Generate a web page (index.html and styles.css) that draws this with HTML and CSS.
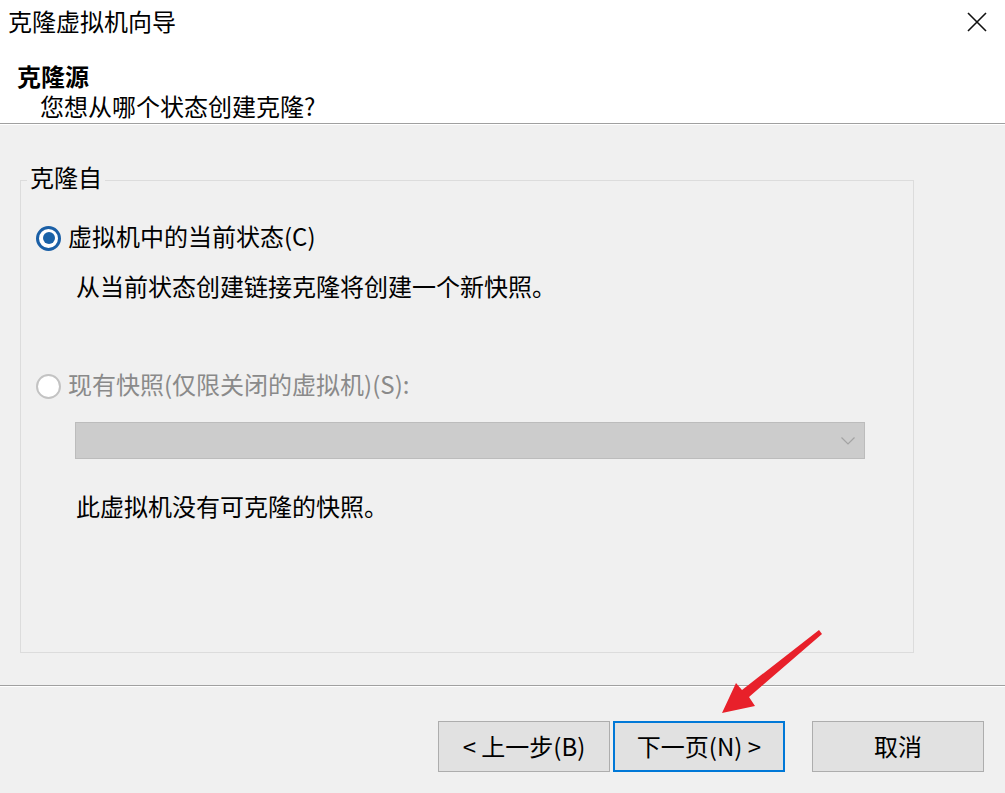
FILE: index.html
```html
<!DOCTYPE html>
<html lang="zh-CN">
<head>
<meta charset="utf-8">
<title>克隆虚拟机向导</title>
<link rel="stylesheet" href="styles.css">
</head>
<body>
<div class="window">
  <div class="titlebar">
    <span class="title">克隆虚拟机向导</span>
    <svg class="close" width="20" height="20" viewBox="0 0 20 20"><path d="M1 1 L19 19 M19 1 L1 19" stroke="#111" stroke-width="1.6" fill="none"/></svg>
  </div>
  <div class="header">
    <div class="h-title">克隆源</div>
    <div class="h-sub">您想从哪个状态创建克隆?</div>
  </div>
  <div class="sep"></div>
  <div class="content">
    <fieldset class="group">
      <legend class="legend">克隆自</legend>
      <div class="radio-row">
        <span class="radio checked"><span class="dot"></span></span>
        <span class="radio-label">虚拟机中的当前状态(C)</span>
      </div>
      <div class="desc desc1">从当前状态创建链接克隆将创建一个新快照。</div>
      <div class="radio-row disabled">
        <span class="radio"></span>
        <span class="radio-label">现有快照(仅限关闭的虚拟机)(S):</span>
      </div>
      <div class="select">
        <svg class="chev" width="14" height="8" viewBox="0 0 14 8"><path d="M0.5 0.5 L7 7 L13.5 0.5" stroke="#a3a3a3" stroke-width="1.2" fill="none"/></svg>
      </div>
      <div class="desc desc2">此虚拟机没有可克隆的快照。</div>
    </fieldset>
  </div>
  <div class="sep footer-sep"></div>
  <div class="buttons">
    <button class="btn">&lt; 上一步(B)</button>
    <button class="btn default">下一页(N) &gt;</button>
    <button class="btn cancel">取消</button>
  </div>
  <svg class="arrow" width="1005" height="793" viewBox="0 0 1005 793">
    <polygon points="819,630 822,634 749,697 755,706 722,713 736,683 742,690" fill="#e8202a"/>
  </svg>
</div>
</body>
</html>
```

FILE: styles.css
```css
* { box-sizing: border-box; }
html, body { margin: 0; padding: 0; }
body {
  width: 1005px;
  height: 793px;
  overflow: hidden;
  background: #f0f0f0;
  font-family: "Noto Sans CJK SC", "Noto Sans", sans-serif;
  color: #000;
}
.window {
  position: relative;
  width: 1005px;
  height: 793px;
  display: flex;
  flex-direction: column;
}
.titlebar {
  height: 46px;
  background: #fff;
  display: flex;
  align-items: center;
  justify-content: space-between;
  padding: 0 18px 0 8px;
}
.title {
  font-size: 24px;
  line-height: 30px;
  padding-bottom: 4px;
}
.close { display: block; margin-bottom: 2px; }
.header {
  background: #fff;
  padding: 15px 0 2px 0;
  height: 77px;
}
.h-title {
  font-size: 24px;
  font-weight: bold;
  line-height: 30px;
  padding-left: 17px;
}
.h-sub {
  font-size: 24px;
  line-height: 30px;
  padding-left: 40px;
}
.sep {
  height: 2px;
  border-top: 1px solid #a0a0a0;
  border-bottom: 1px solid #ffffff;
}
.content {
  padding: 40px 0 0 20px;
  height: 560px;
}
.group {
  margin: 0;
  width: 894px;
  height: 488px;
  border: 1px solid #dcdcdc;
  padding: 0 0 0 15px;
}
.legend {
  font-size: 24px;
  line-height: 24px;
  padding: 0 3px 6px 3px;
  margin-left: -9px;
  color: #000;
}
.radio-row {
  display: flex;
  align-items: center;
  height: 30px;
  margin-top: 28px;
}
.radio {
  width: 25px;
  height: 25px;
  border-radius: 50%;
  border: 2px solid #c3c3c3;
  background: #fff;
  display: flex;
  align-items: center;
  justify-content: center;
  flex: none;
}
.radio.checked {
  border: 3px solid #1a5fa6;
}
.dot {
  width: 12px;
  height: 12px;
  border-radius: 50%;
  background: #1a62a8;
}
.radio-label {
  font-size: 24px;
  line-height: 30px;
  margin-left: 7px;
  padding-bottom: 4px;
}
.disabled .radio-label { color: #8a8a8a; }
.disabled { margin-top: 70px; }
.desc {
  font-size: 24px;
  line-height: 30px;
  padding-left: 40px;
}
.desc1 { margin-top: 18px; }
.select {
  margin: 21px 0 0 39px;
  width: 790px;
  height: 37px;
  background: #cccccc;
  border: 1px solid #bcbcbc;
  display: flex;
  align-items: center;
  justify-content: flex-end;
  padding-right: 9px;
}
.chev { display: block; }
.desc2 { margin-top: 32px; }
.footer-sep { margin-top: 0; }
.buttons {
  display: flex;
  justify-content: flex-end;
  padding: 34px 21px 0 0;
}
.btn {
  width: 172px;
  height: 51px;
  background: #e1e1e1;
  border: 1px solid #adadad;
  font-family: "Noto Sans CJK SC", "Noto Sans", sans-serif;
  font-size: 24px;
  line-height: 30px;
  color: #000;
  padding: 0 0 2px 0;
  margin: 0;
}
.btn.default {
  border: 2px solid #0078d7;
  margin-left: 3px;
}
.btn.cancel { margin-left: 27px; }
.arrow {
  position: absolute;
  left: 0;
  top: 0;
  pointer-events: none;
}
```
